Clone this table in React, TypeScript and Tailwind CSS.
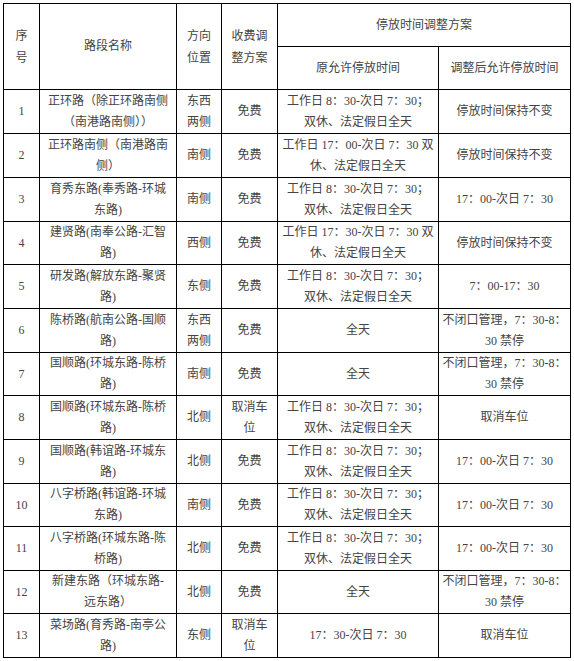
type Row = {
  no: string;
  name: string[];
  dir: string[];
  fee: string[];
  before: string[];
  after: string[];
};

const WEEKDAY_830 = ['工作日 8：30-次日 7：30；', '双休、法定假日全天'];
const FREE = ['免费'];
const CANCEL = ['取消车', '位'];
const NO_CLOSE = ['不闭口管理，7：30-8：', '30 禁停'];
const KEEP = ['停放时间保持不变'];
const EVENING = ['17：00-次日 7：30'];

const rows: Row[] = [
  { no: '1', name: ['正环路（除正环路南侧', '（南港路南侧））'], dir: ['东西', '两侧'], fee: FREE, before: WEEKDAY_830, after: KEEP },
  { no: '2', name: ['正环路南侧（南港路南', '侧）'], dir: ['南侧'], fee: FREE, before: ['工作日 17：00-次日 7：30 双', '休、法定假日全天'], after: KEEP },
  { no: '3', name: ['育秀东路(奉秀路-环城', '东路)'], dir: ['南侧'], fee: FREE, before: WEEKDAY_830, after: EVENING },
  { no: '4', name: ['建贤路(南奉公路-汇智', '路)'], dir: ['西侧'], fee: FREE, before: ['工作日 17：30-次日 7：30 双', '休、法定假日全天'], after: KEEP },
  { no: '5', name: ['研发路(解放东路-聚贤', '路)'], dir: ['东侧'], fee: FREE, before: WEEKDAY_830, after: ['7：00-17：30'] },
  { no: '6', name: ['陈桥路(航南公路-国顺', '路)'], dir: ['东西', '两侧'], fee: FREE, before: ['全天'], after: NO_CLOSE },
  { no: '7', name: ['国顺路(环城东路-陈桥', '路)'], dir: ['南侧'], fee: FREE, before: ['全天'], after: NO_CLOSE },
  { no: '8', name: ['国顺路(环城东路-陈桥', '路)'], dir: ['北侧'], fee: CANCEL, before: WEEKDAY_830, after: ['取消车位'] },
  { no: '9', name: ['国顺路(韩谊路-环城东', '路)'], dir: ['北侧'], fee: FREE, before: WEEKDAY_830, after: EVENING },
  { no: '10', name: ['八字桥路(韩谊路-环城', '东路)'], dir: ['南侧'], fee: FREE, before: WEEKDAY_830, after: EVENING },
  { no: '11', name: ['八字桥路(环城东路-陈', '桥路)'], dir: ['北侧'], fee: FREE, before: WEEKDAY_830, after: EVENING },
  { no: '12', name: ['新建东路（环城东路-', '远东路）'], dir: ['北侧'], fee: FREE, before: ['全天'], after: NO_CLOSE },
  { no: '13', name: ['菜场路(育秀路-南亭公', '路)'], dir: ['东侧'], fee: CANCEL, before: ['17：30-次日 7：30'], after: ['取消车位'] },
];

const cell =
  'bg-white flex flex-col items-center justify-center text-center whitespace-nowrap';

function Cell({ lines, className = '' }: { lines: string[]; className?: string }) {
  return (
    <div className={`${cell} ${className}`}>
      {lines.map((l, i) => (
        <span key={i} className="block">
          {l}
        </span>
      ))}
    </div>
  );
}

export default function App() {
  return (
    <div className="min-h-screen bg-white pt-[3px] pl-[3px]">
      <div className="w-max grid grid-cols-[35px_136px_44px_55px_160px_131px] grid-rows-[42px_42px_43px_43px_43px_42px_43px_43px_42px_43px_43px_42px_43px_42px_43px] gap-px bg-black p-px text-[12px] leading-[21px] text-[#444] font-['Liberation_Serif','Noto_Sans_CJK_SC',serif]">
        {/* header */}
        <Cell lines={['序', '号']} className="row-span-2 leading-[22px]" />
        <Cell lines={['路段名称']} className="row-span-2" />
        <Cell lines={['方向', '位置']} className="row-span-2 leading-[22px]" />
        <Cell lines={['收费调', '整方案']} className="row-span-2 leading-[22px]" />
        <Cell lines={['停放时间调整方案']} className="col-span-2" />
        <Cell lines={['原允许停放时间']} />
        <Cell lines={['调整后允许停放时间']} />

        {rows.map((r) => (
          <div key={r.no} className="contents">
            <Cell lines={[r.no]} />
            <Cell lines={r.name} />
            <Cell lines={r.dir} />
            <Cell lines={r.fee} />
            <Cell lines={r.before} />
            <Cell lines={r.after} />
          </div>
        ))}
      </div>
    </div>
  );
}
